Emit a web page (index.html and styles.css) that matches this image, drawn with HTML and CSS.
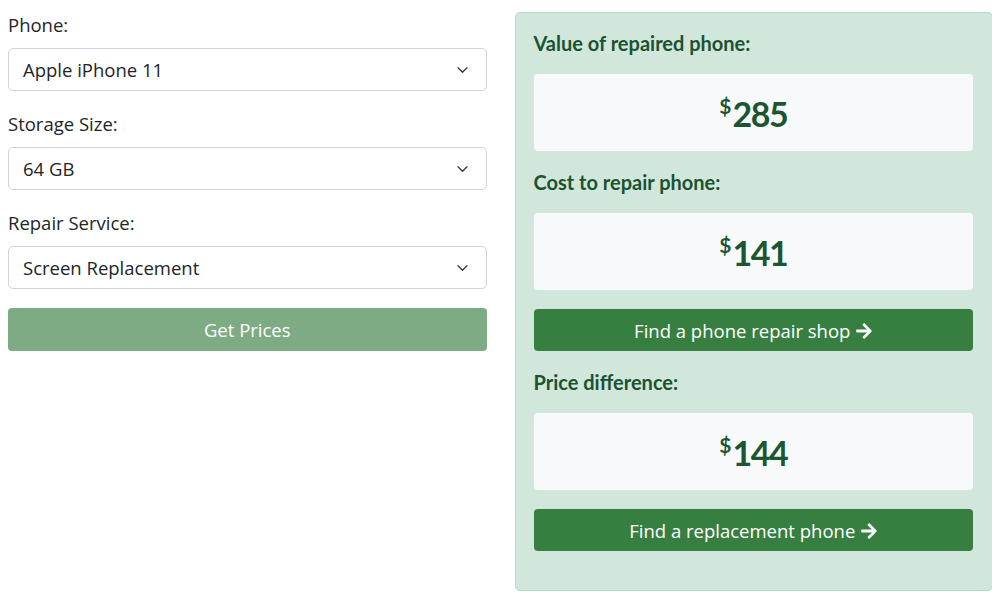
FILE: index.html
```html
<!DOCTYPE html>
<html lang="en">
<head>
<meta charset="utf-8">
<title>Repair or Replace</title>
<link rel="stylesheet" href="styles.css">
</head>
<body>
<div class="calc">
  <form class="inputs">
    <label class="lbl" for="phone">Phone:</label>
    <select class="sel" id="phone"><option>Apple iPhone 11</option></select>
    <label class="lbl" for="storage">Storage Size:</label>
    <select class="sel" id="storage"><option>64 GB</option></select>
    <label class="lbl" for="service">Repair Service:</label>
    <select class="sel" id="service"><option>Screen Replacement</option></select>
    <button type="button" class="btn btn-muted">Get Prices</button>
  </form>
  <div class="results">
    <h3 class="res-title">Value of repaired phone:</h3>
    <div class="price"><sup>$</sup>285</div>
    <h3 class="res-title">Cost to repair phone:</h3>
    <div class="price"><sup>$</sup>141</div>
    <a class="btn btn-green" href="#">Find a phone repair shop <svg class="arrow" viewBox="0 0 448 512" width="16" height="18"><path fill="currentColor" d="M190.5 66.9l22.2-22.2c9.4-9.4 24.6-9.4 33.9 0L441 239c9.4 9.4 9.4 24.6 0 33.9L246.6 467.3c-9.4 9.4-24.6 9.4-33.900 0l-22.2-22.2c-9.5-9.5-9.3-25 .4-34.3L311.4 296H24c-13.3 0-24-10.7-24-24v-32c0-13.3 10.7-24 24-24h287.4L190.9 101.2c-9.8-9.3-10-24.8-.4-34.3z"/></svg></a>
    <h3 class="res-title">Price difference:</h3>
    <div class="price"><sup>$</sup>144</div>
    <a class="btn btn-green" href="#">Find a replacement phone <svg class="arrow" viewBox="0 0 448 512" width="16" height="18"><path fill="currentColor" d="M190.5 66.9l22.2-22.2c9.4-9.4 24.6-9.4 33.9 0L441 239c9.4 9.4 9.4 24.6 0 33.9L246.6 467.3c-9.4 9.4-24.6 9.4-33.9 0l-22.2-22.2c-9.5-9.5-9.3-25 .4-34.3L311.4 296H24c-13.3 0-24-10.7-24-24v-32c0-13.3 10.7-24 24-24h287.4L190.9 101.2c-9.8-9.3-10-24.8-.4-34.3z"/></svg></a>
  </div>
</div>
</body>
</html>
```

FILE: styles.css
```css
* { box-sizing: border-box; }
html, body { background: #ffffff; }
body {
  margin: 8px;
  font-family: "Open Sans", "Noto Sans", sans-serif;
  font-size: 18.5px;
  color: #212529;
}
.calc {
  width: 985px;
  display: grid;
  grid-template-columns: 1fr 1fr;
  column-gap: 28px;
  align-items: start;
}
.inputs {
  display: flex;
  flex-direction: column;
  padding-top: 1px;
}
.lbl {
  display: block;
  line-height: 32px;
  margin-bottom: 7px;
}
.sel {
  appearance: none;
  -webkit-appearance: none;
  display: block;
  width: 100%;
  height: 43px;
  margin-bottom: 17px;
  padding: 0 40px 0 14px;
  font: inherit;
  color: #212529;
  background-color: #fff;
  background-image: url("data:image/svg+xml,%3csvg xmlns='http://www.w3.org/2000/svg' viewBox='0 0 16 16'%3e%3cpath fill='none' stroke='%23343a40' stroke-linecap='round' stroke-linejoin='round' stroke-width='1.7' d='M2 5l6 6 6-6'/%3e%3c/svg%3e");
  background-repeat: no-repeat;
  background-position: right 16px center;
  background-size: 15px 12px;
  border: 1px solid #ced4da;
  border-radius: 5px;
}
.btn {
  display: flex;
  align-items: center;
  justify-content: center;
  gap: 6px;
  width: 100%;
  height: 43px;
  font: inherit;
  font-size: 18.5px;
  color: #fff;
  text-decoration: none;
  border: 0;
  border-radius: 4px;
}
.btn-muted {
  margin-top: 2px;
  background: #7eab84;
}
.btn-green {
  height: 42px;
  background: #377f41;
}
.arrow { display: block; margin-top: 1px; }
.results {
  margin-top: 4px;
  display: flex;
  flex-direction: column;
  gap: 19px;
  padding: 18px 19px 39px 18px;
  background: #d1e7dc;
  border: 1px solid #b5d9c5;
  border-radius: 5px;
}
.res-title {
  margin: 0;
  font-family: "Lato", "Open Sans", sans-serif;
  font-weight: 700;
  font-size: 20px;
  line-height: 24px;
  color: #1b5330;
}
.price {
  height: 77px;
  display: flex;
  align-items: center;
  justify-content: center;
  background: #f8f9fa;
  border-radius: 4px;
  font-family: "Lato", "Open Sans", sans-serif;
  font-weight: 700;
  font-size: 34px;
  letter-spacing: -1.5px;
  line-height: 1;
  color: #1c5630;
  padding-top: 2px;
}
.price sup {
  font-size: 21px;
  letter-spacing: 0;
  align-self: flex-start;
  margin-top: 19px;
  margin-right: 1px;
  line-height: 1;
}
```
